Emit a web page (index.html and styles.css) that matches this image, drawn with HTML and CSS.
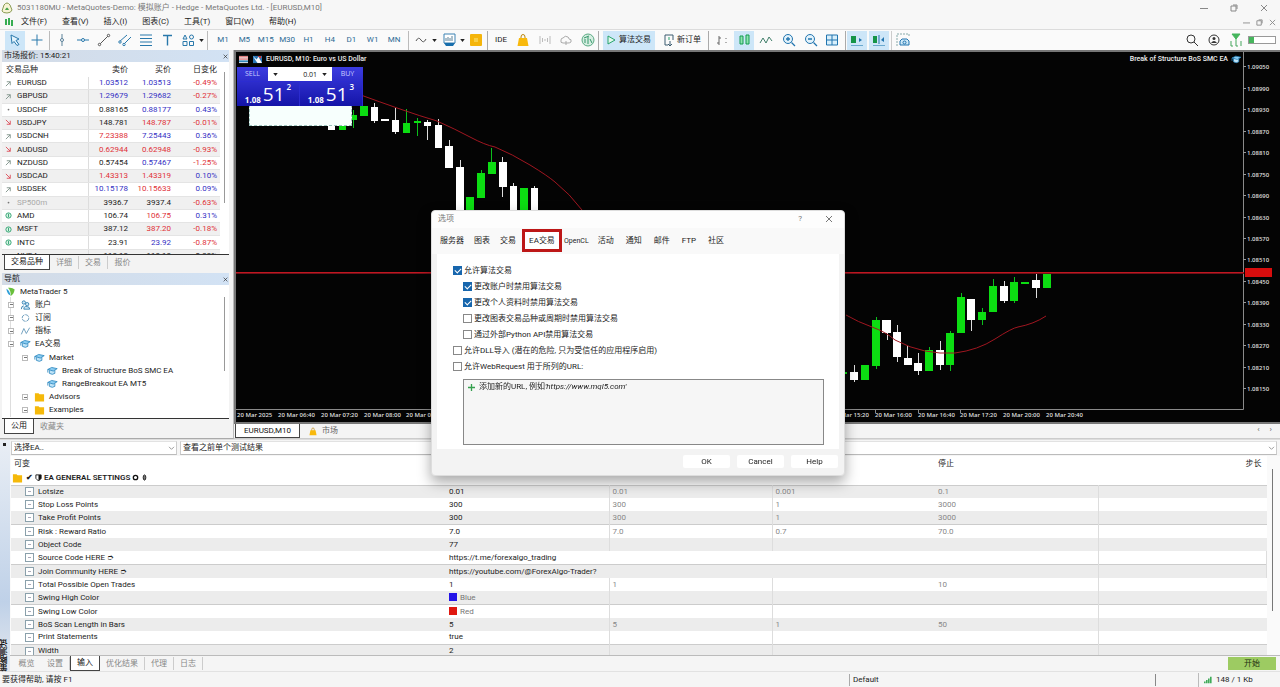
FILE: index.html
```html
<!DOCTYPE html>
<html lang="zh-CN">
<head>
<meta charset="utf-8">
<title>MetaTrader 5</title>
<link rel="stylesheet" href="styles.css">
</head>
<body>
<svg class="defs" aria-hidden="true">
  <symbol id="cap" viewBox="0 0 14 12"><path d="M3 5v4q4 2.500 7 0V5" fill="#bfe3f7" stroke="#2583bd"/><path d="M1 4l5-2.500 7 1.500-5 3z" fill="#8ccdf2" stroke="#2583bd"/><path d="M1 4v4" stroke="#2583bd"/></symbol>
  <symbol id="folder" viewBox="0 0 12 10"><path d="M1 1h4l1 1h5v8H1z" fill="#f5b90a"/></symbol>
  <symbol id="bag" viewBox="0 0 12 14"><path d="M4 6V4q0-2.500 2-2.500T8 4v2" fill="none" stroke="#b98409"/><path d="M2 5h8l1.500 8h-11z" fill="#f8b90d"/></symbol>
  <symbol id="up" viewBox="0 0 8 8"><path d="M1 7l5-5M2 2h4v4" fill="none" stroke="#7a8f86"/></symbol>
  <symbol id="down" viewBox="0 0 8 8"><path d="M1 1l5 5M2 6h4V2" fill="none" stroke="#dc4752"/></symbol>
  <symbol id="dot" viewBox="0 0 8 8"><circle cx="4" cy="4" r="1" fill="#777"/></symbol>
  <symbol id="coin" viewBox="0 0 8 8"><circle cx="4" cy="4" r="3" fill="#d9f2e6" stroke="#29a06c"/><path d="M4 2v4" stroke="#29a06c"/></symbol>
  <symbol id="caret" viewBox="0 0 6 4"><path d="M0 0h6L3 4z" fill="#222"/></symbol>
  <symbol id="chev" viewBox="0 0 8 6"><path d="M1 1l3 3 3-3" fill="none" stroke="#888"/></symbol>
  <symbol id="close" viewBox="0 0 8 8"><path d="M1 1l6 6M7 1L1 7" fill="none" stroke="currentColor"/></symbol>
  <symbol id="max" viewBox="0 0 8 8"><path d="M1 2h5v5H1zM3 1h4v4" fill="none" stroke="currentColor"/></symbol>
  <symbol id="min" viewBox="0 0 8 8"><path d="M0 4.500h8" stroke="currentColor"/></symbol>
</svg>

<header class="titlebar">
  <svg class="i12" viewBox="0 0 12 12"><path d="M3 3q3-4 6 0l2 5q-1 3-5 3T1 9z" fill="#f7f3d5" stroke="#8a9c54"/><path d="M4 8q2-5 4 0z" fill="#4ba64f"/></svg>
  <h1>5031180MU - MetaQuotes-Demo: 模拟账户 - Hedge - MetaQuotes Ltd. - [EURUSD,M10]</h1>
  <div class="winbtns"><button aria-label="最小化"><svg><use href="#min"/></svg></button><button aria-label="还原"><svg><use href="#max"/></svg></button><button aria-label="关闭"><svg><use href="#close"/></svg></button></div>
</header>
<nav class="menubar">
  <svg class="i10" viewBox="0 0 10 10"><path d="M2 2v6M5 1v7M8 3v6" stroke="#37ad52" stroke-width="2"/></svg>
  <button>文件(F)</button><button>查看(V)</button><button>插入(I)</button><button>图表(C)</button><button>工具(T)</button><button>窗口(W)</button><button>帮助(H)</button>
  <div class="winbtns small"><button aria-label="最小化"><svg><use href="#min"/></svg></button><button aria-label="还原"><svg><use href="#max"/></svg></button><button aria-label="关闭"><svg><use href="#close"/></svg></button></div>
</nav>

<div class="toolbar">
  <div class="tg tg-cursor">
    <button class="on" aria-label="光标"><svg viewBox="0 0 14 14"><path d="M3 2l8 4-3 1.500 3 4-2 1-3-4-2 2z" fill="#e4f4fd" stroke="#2878ab"/></svg></button>
    <button aria-label="十字"><svg viewBox="0 0 14 14"><path d="M7 1.500v11M1.500 7h11" stroke="#2878ab"/></svg></button>
  </div>
  <div class="tg tg-draw">
    <button aria-label="垂直线"><svg viewBox="0 0 14 14"><path d="M7 1v12" stroke="#5b8199"/><circle cx="7" cy="7" r="1.500" fill="#fff" stroke="#5b8199"/></svg></button>
    <button aria-label="水平线"><svg viewBox="0 0 14 14"><path d="M1 7h12" stroke="#2878ab"/><circle cx="7" cy="7" r="1.500" fill="#fff" stroke="#2878ab"/></svg></button>
    <button aria-label="趋势线"><svg viewBox="0 0 14 14"><path d="M2 12L12 2" stroke="#555"/><circle cx="2.500" cy="11.500" r="1.200" fill="#fff" stroke="#555"/><circle cx="11.500" cy="2.500" r="1.200" fill="#fff" stroke="#555"/></svg></button>
    <button aria-label="通道"><svg viewBox="0 0 14 14"><path d="M1 9l8-7M5 12l8-8" stroke="#2878ab"/><circle cx="2" cy="9" r="1.200" fill="#fff" stroke="#2878ab"/><circle cx="6" cy="11.500" r="1.200" fill="#fff" stroke="#2878ab"/></svg></button>
    <button aria-label="斐波纳契"><svg viewBox="0 0 14 14"><path d="M1 2h12M1 5.500h12M1 9h12M1 12.500h12" stroke="#2878ab"/></svg></button>
    <button aria-label="文字"><svg viewBox="0 0 14 14"><path d="M3 2.500h9M7.500 2.500v10" stroke="#2878ab" stroke-width="1.400"/></svg></button>
    <button aria-label="图形"><svg viewBox="0 0 14 14"><path d="M4 2l2 4H2z" fill="none" stroke="#2878ab"/><circle cx="10.500" cy="4" r="2" fill="none" stroke="#2878ab"/><path d="M2 8.500h4v4H2zM8.500 8.500h4v4h-4z" fill="none" stroke="#2878ab"/></svg></button>
  </div>
  <svg class="caret"><use href="#caret"/></svg>
  <div class="tg tg-time"><button>M1</button><button>M5</button><button>M15</button><button>M30</button><button>H1</button><button>H4</button><button>D1</button><button>W1</button><button>MN</button></div>
  <div class="tg tg-ind">
    <button aria-label="指标"><svg viewBox="0 0 14 14"><path d="M2 8q2.500-5 5-1t5-1" fill="none" stroke="#555"/></svg></button><svg class="caret"><use href="#caret"/></svg>
    <button aria-label="模板"><svg viewBox="0 0 14 14"><path d="M2 1h11v9H2z" fill="#fff" stroke="#3c83b4"/><path d="M4 8V5M6 8V4M8 8V5M10 8V3" stroke="#5b8199"/><path d="M2 10h11l-2 3H4z" fill="#176eac"/></svg></button><svg class="caret"><use href="#caret"/></svg>
    <button aria-label="工具箱"><svg viewBox="0 0 14 14"><rect x="1" y="1" width="12" height="12" rx="1" fill="#f5b50b"/><path d="M5 5h4v4H5z" fill="#f9cf45"/></svg></button>
  </div>
  <div class="tg tg-ide">
    <button>IDE</button>
    <button aria-label="市场"><svg><use href="#bag"/></svg></button>
    <button aria-label="信号"><svg viewBox="0 0 14 14"><path d="M2 3v8M12 3v8M4.500 5v4M9.500 5v4M7 6v2" stroke="#bbb"/></svg></button>
    <button aria-label="云"><svg viewBox="0 0 14 14"><path d="M4 10q-3 0-2-3 0-2 2-2 2-3 5-1 1 1 1 2 3 0 2 3-1 1-3 1zM7 8v4" fill="none" stroke="#aaa"/></svg></button>
    <button aria-label="网络"><svg viewBox="0 0 14 14"><circle cx="7" cy="7" r="6" fill="#d5eee1" stroke="#5aaa83"/><path d="M4 10V6M7 11V4M9 6l2 4M3 5l5-2" stroke="#34976a"/></svg></button>
  </div>
  <div class="tg tg-algo">
    <button class="on text"><svg viewBox="0 0 14 14"><path d="M4 3l7 4-7 4z" fill="#e2f8ed" stroke="#27a36c"/></svg>算法交易</button>
    <button class="text"><svg viewBox="0 0 14 14"><path d="M6 12H3V2h8v5M8 8v5M6 11l2 2 2-2" fill="none" stroke="#3c5c70"/><path d="M7 4v3" stroke="#27a36c"/></svg>新订单</button>
  </div>
  <div class="tg tg-type">
    <button aria-label="柱形图"><svg viewBox="0 0 14 14"><path d="M4 3v9M4 5h2M2 10h2M11 5v1M11 9v1" stroke="#666"/></svg></button>
    <button class="on" aria-label="蜡烛图"><svg viewBox="0 0 14 14"><path d="M3 3h3v8H3zM9 2h3v9H9z" fill="#8fe4b0" stroke="#139b50"/></svg></button>
    <button aria-label="线形图"><svg viewBox="0 0 14 14"><path d="M1 10l3-5 3 5 3-6 3 4" fill="none" stroke="#3e7d68"/></svg></button>
  </div>
  <div class="tg tg-zoom">
    <button aria-label="放大"><svg viewBox="0 0 14 14"><circle cx="6" cy="6" r="4.500" fill="#e2f2fb" stroke="#2275af"/><path d="M9.500 9.500L13 13M6 4v4M4 6h4" stroke="#2275af" stroke-width="1.300"/></svg></button>
    <button aria-label="缩小"><svg viewBox="0 0 14 14"><circle cx="6" cy="6" r="4.500" fill="#e2f2fb" stroke="#2275af"/><path d="M9.500 9.500L13 13M4 6h4" stroke="#2275af" stroke-width="1.300"/></svg></button>
    <button aria-label="平铺"><svg viewBox="0 0 14 14"><path d="M1.500 2h11v10h-11zM7 2v10M1.500 7h11" fill="#d8effb" stroke="#2275af"/></svg></button>
  </div>
  <div class="tg tg-scroll">
    <button class="on" aria-label="自动滚动"><svg viewBox="0 0 14 14"><path d="M1 3h5v7H1z" fill="#159447"/><path d="M9 5l3 2-3 2z" fill="#2275af"/><path d="M1 12.500h12" stroke="#6ba9cf"/></svg></button>
    <button class="on" aria-label="图表平移"><svg viewBox="0 0 14 14"><path d="M1 3h4v7H1z" fill="#159447"/><path d="M7 2v9" stroke="#2275af"/><path d="M12 4L9 7l3 2z" fill="#2275af"/><path d="M1 12.500h12" stroke="#6ba9cf"/></svg></button>
  </div>
  <div class="tg"><button aria-label="截图"><svg viewBox="0 0 14 14"><path d="M1 13V1h12v3" fill="none" stroke="#8aa" stroke-dasharray="2 1"/><path d="M4 12V8l2-2h5l2 2v4z" fill="#cfe9f8" stroke="#2275af"/><circle cx="8.500" cy="9.500" r="1.500" fill="none" stroke="#2275af"/></svg></button></div>
  <div class="tools-right">
    <button aria-label="搜索"><svg viewBox="0 0 14 14"><circle cx="6" cy="6" r="4" fill="none" stroke="#333"/><path d="M9 9l4 4" stroke="#333"/></svg></button>
    <button aria-label="账户"><svg viewBox="0 0 14 14"><circle cx="7" cy="7" r="5" fill="none" stroke="#333"/><circle cx="7" cy="5.500" r="1.500" fill="#333"/><path d="M4 10q3-4 6 0z" fill="#333"/></svg></button>
    <button aria-label="VPS"><svg viewBox="0 0 14 14"><path d="M3 1h8L7 6zM7 5v3" fill="#45b55c" stroke="#45b55c"/><path d="M2 8v5h2M7 8v5h2M12 8v5" fill="none" stroke="#45a55c"/></svg></button>
    <div class="battery"><i></i></div>
  </div>
</div>

<main class="work">
  <aside class="side">
    <section class="panel market">
      <h2 class="phead">市场报价: 15:40:21 <button aria-label="关闭"><svg><use href="#close"/></svg></button></h2>
      <div class="pbody">
        <table class="quotes">
          <colgroup><col class="q-icon"><col class="q-name"><col class="q-num"><col class="q-num"><col class="q-chg"></colgroup>
          <thead><tr><th colspan="2">交易品种</th><th>卖价</th><th>买价</th><th>日变化</th></tr></thead>
          <tbody>
          <tr><td><svg><use href="#up"/></svg></td><td>EURUSD</td><td class="b">1.03512</td><td class="b">1.03513</td><td class="r">-0.49%</td></tr>
          <tr><td><svg><use href="#up"/></svg></td><td>GBPUSD</td><td class="b">1.29679</td><td class="b">1.29682</td><td class="r">-0.27%</td></tr>
          <tr><td><svg><use href="#dot"/></svg></td><td>USDCHF</td><td>0.88165</td><td class="b">0.88177</td><td class="b">0.43%</td></tr>
          <tr><td><svg><use href="#down"/></svg></td><td>USDJPY</td><td>148.781</td><td class="r">148.787</td><td class="r">-0.01%</td></tr>
          <tr><td><svg><use href="#up"/></svg></td><td>USDCNH</td><td class="r">7.23388</td><td class="b">7.25443</td><td class="b">0.36%</td></tr>
          <tr><td><svg><use href="#down"/></svg></td><td>AUDUSD</td><td class="r">0.62944</td><td class="r">0.62948</td><td class="r">-0.93%</td></tr>
          <tr><td><svg><use href="#up"/></svg></td><td>NZDUSD</td><td>0.57454</td><td class="b">0.57467</td><td class="r">-1.25%</td></tr>
          <tr><td><svg><use href="#down"/></svg></td><td>USDCAD</td><td class="r">1.43313</td><td class="r">1.43319</td><td class="b">0.10%</td></tr>
          <tr><td><svg><use href="#up"/></svg></td><td>USDSEK</td><td class="b">10.15178</td><td class="r">10.15633</td><td class="b">0.09%</td></tr>
          <tr><td><svg><use href="#dot"/></svg></td><td class="g">SP500m</td><td>3936.7</td><td>3937.4</td><td class="r">-0.63%</td></tr>
          <tr><td><svg><use href="#coin"/></svg></td><td>AMD</td><td>106.74</td><td class="r">106.75</td><td class="b">0.31%</td></tr>
          <tr><td><svg><use href="#coin"/></svg></td><td>MSFT</td><td>387.12</td><td class="r">387.20</td><td class="r">-0.18%</td></tr>
          <tr><td><svg><use href="#coin"/></svg></td><td>INTC</td><td>23.91</td><td class="b">23.92</td><td class="r">-0.87%</td></tr>
          <tr><td></td><td>NVDA</td><td>118.13</td><td>118.18</td><td>0.33%</td></tr>
          </tbody>
        </table>
        <div class="scroll scroll-a"></div>
      </div>
      <div class="tabs"><button class="cur">交易品种</button><button>详细</button><button>交易</button><button>报价</button></div>
    </section>
    <section class="panel navi">
      <h2 class="phead">导航 <button aria-label="关闭"><svg><use href="#close"/></svg></button></h2>
      <div class="pbody">
        <ul class="tree">
          <li class="l0"><svg viewBox="0 0 12 12"><path d="M1 2q4 2 5 8-4-1-5-8z" fill="#2f9fd8"/><path d="M3 1q5-1 8 2-1 6-5 8 1-6-3-10z" fill="#69bf3c"/></svg>MetaTrader 5</li>
          <li class="l1"><i class="box"></i><svg viewBox="0 0 12 12"><circle cx="4" cy="3" r="2" fill="#cfe9f8" stroke="#2878ab"/><circle cx="8" cy="5" r="2" fill="#cfe9f8" stroke="#2878ab"/><path d="M1 11q0-4 3-4M4 11q0-4 4-3 3 0 3 3z" fill="#cfe9f8" stroke="#2878ab"/></svg>账户</li>
          <li class="l1"><i class="box"></i><svg viewBox="0 0 12 12"><circle cx="6" cy="6" r="4" fill="none" stroke="#5a90b4" stroke-dasharray="5 1"/></svg>订阅</li>
          <li class="l1"><i class="box"></i><svg viewBox="0 0 12 12"><path d="M1 10l3-7 3 6 4-7" fill="none" stroke="#5a90b4"/></svg>指标</li>
          <li class="l1"><i class="box open"></i><svg><use href="#cap"/></svg>EA交易</li>
          <li class="l2"><i class="box open"></i><svg><use href="#cap"/></svg>Market</li>
          <li class="l3"><svg><use href="#cap"/></svg>Break of Structure BoS SMC EA</li>
          <li class="l3"><svg><use href="#cap"/></svg>RangeBreakout EA MT5</li>
          <li class="l2"><i class="box"></i><svg><use href="#folder"/></svg>Advisors</li>
          <li class="l2"><i class="box"></i><svg><use href="#folder"/></svg>Examples</li>
        </ul>
        <div class="scroll scroll-b"></div>
      </div>
      <div class="tabs"><button class="cur narrow">公用</button><button>收藏夹</button></div>
    </section>
  </aside>

  <section class="chartarea">
    <div class="chart">
      <svg class="plot" viewBox="236 52 1044 370" preserveAspectRatio="xMinYMin slice" role="img" aria-label="EURUSD M10">
        <path d="M236 409.500H1243.500M1243.500 52V409.500M875.500 409v4M918.500 409v4M960.500 409v4" fill="none" stroke="#8a8a8a"/>
        <path d="M1243 66.500h3M1243 88.500h3M1243 109.500h3M1243 131.500h3M1243 152.500h3M1243 174.500h3M1243 195.500h3M1243 217.500h3M1243 238.500h3M1243 259.500h3M1243 281.500h3M1243 302.500h3M1243 324.500h3M1243 345.500h3M1243 367.500h3M1243 388.500h3" stroke="#999"/>
        <g fill="none" stroke="#ddd">
          <path d="M374.500 103V123M395.500 108V134M427.500 120V140M438.500 119V146M449.500 140V168M460.500 160V210M502.500 157V197M513.500 183V210M534.500 186V210M854.500 365V382M887.500 320V340M897.500 325V362M907.500 346V365M918.500 353V375M940.500 341V370M971.500 299V331M1004.500 281V303M1036.500 274V298"/>
        </g>
        <g fill="none" stroke="#0bbf1b">
          <path d="M353.500 110V128M417.500 118V136M406.500 109V124M481.500 170V198M491.500 148V174M876.500 317V369M929.500 347V371M950.500 331V371M961.500 293V333M982.500 308V325M993.500 279V312M1014.500 277V303"/>
        </g>
        <g fill="#fff">
          <path d="M328 124h7v6h-7zM371 107h7v14h-7zM381 119h8v2h-8zM392 120h7v12h-7zM424 122h7v4h-7zM435 125h7v23h-7zM445 146h8v22h-8zM456 167h8v43h-8zM499 162h8v25h-8zM510 186h7v24h-7zM531 188h7v22h-7z"/>
          <path d="M850 372h8v8h-8zM882 320h9v13h-9zM893 332h8v25h-8zM904 358h8v7h-8zM914 363h8v8h-8zM936 350h8v15h-8zM967 299h8v21h-8zM1000 286h8v15h-8zM1032 280h8v8h-8z"/>
        </g>
        <g fill="#0cdd12">
          <path d="M339 124h7v6h-7zM352 115h5v5h-5zM360 106h8v10h-8zM403 123h7v10h-7zM414 121h7v2h-7zM466 197h8v13h-8zM477 173h8v25h-8zM488 162h8v12h-8zM520 188h8v22h-8z"/>
          <path d="M843 372h4v2h-4zM861 365h8v15h-8zM872 320h8v46h-8zM925 350h8v21h-8zM946 333h8v32h-8zM957 297h8v36h-8zM978 312h8v8h-8zM989 286h8v26h-8zM1010 282h8v19h-8zM1021 282h8v2h-8zM1043 272h8v16h-8z"/>
        </g>
        <path d="M358 94Q380 102 400 109T437 121Q455 129 470 137T495 147Q512 154 530 165T555 182Q570 194 582 210M846 315Q858 322 872 327T895 340Q910 348 925 351T955 353Q978 350 995 339T1018 327Q1034 324 1046 316" fill="none" stroke="#a01620"/>
        <path d="M236 272.500H1244" stroke="#c01620"/>
        <path d="M236 273.500H1244" stroke="#701018"/>
        <rect x="1245" y="268" width="27" height="9" fill="#d80d0d"/>
        <g class="axis">
          <text x="1247" y="69">1.09050</text><text x="1247" y="91">1.08990</text><text x="1247" y="112">1.08930</text><text x="1247" y="134">1.08870</text><text x="1247" y="155">1.08810</text><text x="1247" y="177">1.08750</text><text x="1247" y="198">1.08690</text><text x="1247" y="220">1.08630</text><text x="1247" y="241">1.08570</text><text x="1247" y="262">1.08510</text><text x="1247" y="284">1.08450</text><text x="1247" y="305">1.08390</text><text x="1247" y="327">1.08330</text><text x="1247" y="348">1.08270</text><text x="1247" y="370">1.08210</text><text x="1247" y="391">1.08150</text>
          <text x="237" y="417">20 Mar 2025</text><text x="278" y="417">20 Mar 06:40</text><text x="321" y="417">20 Mar 07:20</text><text x="364" y="417">20 Mar 08:00</text><text x="406" y="417">20 Mar 08:40</text><text x="832" y="417">20 Mar 15:20</text><text x="875" y="417">20 Mar 16:00</text><text x="918" y="417">20 Mar 16:40</text><text x="960" y="417">20 Mar 17:20</text><text x="1003" y="417">20 Mar 20:00</text><text x="1046" y="417">20 Mar 20:40</text>
        </g>
      </svg>
      <div class="chart-title">
        <svg viewBox="0 0 12 10"><path d="M1 1h10v8H1z" fill="#eee"/><path d="M1 2h10M1 4.500h10" stroke="#d44" stroke-width="1"/><path d="M1 7h10" stroke="#38b" stroke-width="2"/></svg>
        <svg viewBox="0 0 12 10"><path d="M1 1h10v8H1z" fill="#2a78b8"/><path d="M1 1l4 4 2-3 4 7H6L4 6z" fill="#fff"/><path d="M6 1h4v3z" fill="#d33"/></svg>
        <span>EURUSD, M10: Euro vs US Dollar</span>
        <span class="ea">Break of Structure BoS SMC EA</span>
        <svg class="eaicon"><use href="#cap"/></svg>
      </div>
      <div class="hint"></div>
      <div class="oneclick">
        <div class="oc-top"><button>SELL</button><div class="vol"><svg class="caret"><use href="#caret"/></svg><input aria-label="交易量" value="0.01"><svg class="caret"><use href="#caret"/></svg></div><button>BUY</button></div>
        <div class="oc-price"><div><small>1.08</small><b>51</b><sup>2</sup></div><div><small>1.08</small><b>51</b><sup>3</sup></div></div>
      </div>
    </div>
    <div class="charttabs"><button class="cur">EURUSD,M10</button><button><svg><use href="#bag"/></svg>市场</button><span class="arrows"><i>‹</i><i>›</i></span></div>
  </section>
</main>

<section class="tester">
  <div class="strip"><i></i><span>策略测试</span></div>
  <div class="tbody">
    <div class="selects">
      <div class="sel s1"><select aria-label="选择EA"><option>选择EA..</option></select><svg><use href="#chev"/></svg></div>
      <div class="sel s2"><select aria-label="测试结果"><option>查看之前单个测试结果</option></select><svg><use href="#chev"/></svg></div>
    </div>
    <div class="paramwrap">
      <table class="params">
        <colgroup><col class="c1"><col class="c2"><col class="c2"><col class="c2"><col class="c2"><col></colgroup>
        <thead><tr><th>可变</th><th></th><th></th><th></th><th>停止</th><th class="right">步长</th></tr></thead>
        <tbody>
        <tr class="group"><td colspan="6"><svg class="fold"><use href="#folder"/></svg>✔ <svg class="mini" viewBox="0 0 8 8"><path d="M1 1h6v4L4 8 1 5z" fill="none" stroke="#111"/><path d="M4 1h3v4L4 8z" fill="#111"/></svg> EA GENERAL SETTINGS <svg class="mini" viewBox="0 0 8 8"><circle cx="4" cy="4" r="2.500" fill="none" stroke="#111" stroke-width="1.500"/></svg> <svg class="mini" viewBox="0 0 8 8"><ellipse cx="4" cy="4" rx="1.500" ry="3" fill="#777" stroke="#111"/></svg></td></tr>
        <tr><td><label><input type="checkbox">Lotsize</label></td><td>0.01</td><td>0.01</td><td>0.001</td><td>0.1</td><td></td></tr>
        <tr><td><label><input type="checkbox">Stop Loss Points</label></td><td>300</td><td>300</td><td>1</td><td>3000</td><td></td></tr>
        <tr><td><label><input type="checkbox">Take Profit Points</label></td><td>300</td><td>300</td><td>1</td><td>3000</td><td></td></tr>
        <tr><td><label><input type="checkbox">Risk : Reward Ratio</label></td><td>7.0</td><td>7.0</td><td>0.7</td><td>70.0</td><td></td></tr>
        <tr><td><label><input type="checkbox">Object Code</label></td><td>77</td><td></td><td></td><td></td><td></td></tr>
        <tr><td><label><input type="checkbox">Source Code HERE ➮</label></td><td colspan="4">https://t.me/forexalgo_trading</td><td></td></tr>
        <tr><td><label><input type="checkbox">Join Community HERE ➮</label></td><td colspan="4">https://youtube.com/@ForexAlgo-Trader?</td><td></td></tr>
        <tr><td><label><input type="checkbox">Total Possible Open Trades</label></td><td>1</td><td>1</td><td></td><td>10</td><td></td></tr>
        <tr><td><label><input type="checkbox">Swing High Color</label></td><td class="col"><i class="sw blue"></i>Blue</td><td></td><td></td><td></td><td></td></tr>
        <tr><td><label><input type="checkbox">Swing Low Color</label></td><td class="col"><i class="sw red"></i>Red</td><td></td><td></td><td></td><td></td></tr>
        <tr><td><label><input type="checkbox">BoS Scan Length in Bars</label></td><td>5</td><td>5</td><td>1</td><td>50</td><td></td></tr>
        <tr><td><label><input type="checkbox">Print Statements</label></td><td>true</td><td></td><td></td><td></td><td></td></tr>
        <tr><td><label><input type="checkbox">Width</label></td><td>2</td><td></td><td></td><td></td><td></td></tr>
        </tbody>
      </table>
      <div class="scroll scroll-c"></div>
    </div>
    <div class="tabs ttabs"><button>概览</button><button>设置</button><button class="cur narrow">输入</button><button>优化结果</button><button>代理</button><button>日志</button><button class="start">开始</button></div>
  </div>
</section>
<footer class="status"><span class="help">要获得帮助, 请按 F1</span><span class="prof">Default</span><span class="cell"></span><span class="cell2"></span><span class="net"><svg viewBox="0 0 10 10"><path d="M1 7v2M3.500 5v4M6 3v6M8.500 1v8" stroke="#3faa58" stroke-width="2"/></svg>148 / 1 Kb</span></footer>

<div class="dialog" role="dialog" aria-label="选项">
  <div class="dhead"><span>选项</span><button aria-label="帮助">?</button><button aria-label="关闭"><svg><use href="#close"/></svg></button></div>
  <div class="dtabs"><button>服务器</button><button>图表</button><button>交易</button><button class="mark">EA交易</button><button>OpenCL</button><button>活动</button><button>通知</button><button>邮件</button><button>FTP</button><button>社区</button></div>
  <form class="dform">
    <label><input type="checkbox" checked>允许算法交易</label>
    <label class="in"><input type="checkbox" checked>更改账户时禁用算法交易</label>
    <label class="in"><input type="checkbox" checked>更改个人资料时禁用算法交易</label>
    <label class="in"><input type="checkbox">更改图表交易品种或周期时禁用算法交易</label>
    <label class="in"><input type="checkbox">通过外部Python API禁用算法交易</label>
    <label><input type="checkbox">允许DLL导入 (潜在的危险, 只为受信任的应用程序启用)</label>
    <label><input type="checkbox">允许WebRequest 用于所列的URL:</label>
    <div class="urls"><svg viewBox="0 0 8 8"><path d="M4 0v8M0 4h8" stroke="#35a04e" stroke-width="1.500"/></svg><span>添加新的URL, 例如<em>'https://www.mql5.com'</em></span></div>
  </form>
  <div class="dfoot"><button>OK</button><button>Cancel</button><button>Help</button></div>
</div>
</body>
</html>
```
FILE: styles.css
```css
* { box-sizing: border-box; }
body {
  margin: 0;
  min-height: 100vh;
  display: flex;
  flex-direction: column;
  overflow: hidden;
  background: #f5f5f5;
  color: #1c1c1c;
  font: 8px/12px Roboto, "Noto Sans CJK SC", sans-serif;
}
button, input, select { font: inherit; color: inherit; margin: 0; padding: 0; border: 0; background: none; }
h1, h2, ul { margin: 0; padding: 0; font-weight: 400; }
svg { flex: none; display: block; }
.defs { position: absolute; width: 0; height: 0; }
i { font-style: normal; }

.titlebar, .menubar { display: flex; align-items: center; background: #f7f7f7; }
.titlebar { height: 15px; padding-left: 1px; gap: 4px; }
.titlebar h1 { font-size: 8px; color: #777; }
.i12 { width: 12px; height: 12px; }
.i10 { width: 10px; height: 10px; }
.menubar { height: 14px; padding-left: 4px; gap: 15px; }
.menubar .i10 { margin-right: -8px; }
.winbtns { margin-left: auto; display: flex; gap: 22px; padding-right: 12px; color: #888; }
.winbtns svg { width: 8px; height: 8px; }
.winbtns.small { gap: 6px; padding-right: 4px; }
.winbtns.small svg { width: 7px; height: 7px; }

.toolbar { height: 21px; display: flex; align-items: center; background: #fafafa; border-top: 1px solid #dcdcdc; padding-left: 5px; }
.toolbar button { min-width: 20px; height: 19px; display: flex; align-items: center; justify-content: center; }
.toolbar button svg { width: 14px; height: 14px; }
.toolbar .on { background: #cde6f8; }
.caret { width: 5px; height: 3px; }
.tg { flex: none; display: flex; align-items: center; justify-content: space-between; }
.tg-cursor { width: 45px; border-right: 1px solid #bbb; padding-right: 2px; }
.tg-draw { width: 146px; margin: 0 1px 0 2px; }
.tg-time { width: 202px; margin-left: 3px; padding: 0 4px 0 5px; border: solid #bbb; border-width: 0 1px; color: #2d6b95; }
.tg-ind { width: 77px; padding-right: 1px; margin-left: 2px; border-right: 1px solid #aaa; }
.tg-ide { width: 108px; margin-left: 3px; border-right: 1px solid #aaa; }
.tg-algo { width: 106px; margin-left: 4px; border-right: 1px solid #aaa; padding-right: 3px; }
.toolbar .text { padding: 0 4px 0 1px; gap: 1px; }
.tg-type { width: 64px; margin-left: 3px; }
.tg-zoom { width: 67px; margin-left: 3px; padding-right: 3px; border-right: 1px solid #aaa; }
.tg-scroll { width: 45px; margin: 0 1px 0 1px; padding-right: 2px; border-right: 1px solid #ccc; }
.tools-right { margin-left: auto; display: flex; align-items: center; gap: 2px; padding-right: 4px; }
.battery { width: 28px; height: 8px; border: 1px solid #999; background: #fff; }
.battery i { display: block; width: 5px; height: 6px; background: #45b55c; }

.work { flex: 1; min-height: 0; display: grid; grid-template-columns: 234px 1fr; }
.side { display: flex; flex-direction: column; background: #f3f3f3; border-right: 1px solid #bbb; border-bottom: 1px solid #aaa; padding: 0 4px 3px 2px; gap: 3px; }
.panel { display: flex; flex-direction: column; }
.phead { height: 12px; display: flex; justify-content: space-between; padding: 0 1px 0 2px; font-size: 8px; line-height: 12px; background: linear-gradient(90deg, #d3dbe6, #d2e2f4); color: #222; }
.phead button { display: flex; align-items: center; }
.phead svg { width: 5px; height: 5px; }
.pbody { background: #fff; border-bottom: 1px solid #333; overflow: hidden; display: flex; }
.market .pbody { height: 193px; }
.navi .pbody { height: 134px; }
.quotes { width: 218px; height: 201px; border-collapse: collapse; table-layout: fixed; }
.q-icon { width: 14px; }
.q-name { width: 72px; }
.q-num { width: 43px; }
.q-chg { width: 46px; }
.quotes th, .quotes td { padding: 0 3px 0 0; text-align: right; line-height: 12px; font-weight: 400; }
.quotes tbody td { border-bottom: 1px solid #e4e4e4; }
.quotes th { height: 15px; }
.quotes th:first-child { text-align: left; padding-left: 4px; }
.quotes td:first-child { padding-left: 3px; }
.quotes td:nth-child(2) { text-align: left; padding-left: 1px; border-right: 1px solid #ddd; }
.quotes tbody tr:nth-child(even) { background: #f0f0f0; }
.quotes svg { width: 7px; height: 7px; }
.quotes .b { color: #3530c4; }
.quotes .r { color: #e03038; }
.quotes .g { color: #aaa; }
.scroll { width: 1px; background: #999; margin-left: 4px; }
.scroll-a { margin-top: 10px; height: 131px; }
.scroll-b { margin-top: 12px; height: 74px; }
.scroll-c { margin: 13px 0 0 5px; height: 142px; background: #777; }

.tabs { display: flex; height: 15px; padding-left: 2px; color: #888; }
.tabs button { padding: 0 6px; margin: 1px 0; min-width: 29px; }
.tabs button + button:not(.cur):not(.start) { border-right: 1px solid #ccc; }
.tabs button:nth-last-child(1) { border-right: 0 !important; }
.tabs .cur, .charttabs .cur { background: #fff; border: 1px solid #444; border-top: 0; color: #111; margin: 0; }
.tabs .cur { min-width: 46px; }
.tabs .cur.narrow { min-width: 30px; }

.tree { width: 218px; height: 132px; display: grid; grid-template-rows: repeat(10, 1fr); list-style: none; background: linear-gradient(#ddd, #ddd) 8px 12px / 1px 100% no-repeat; }
.tree li { display: flex; align-items: center; gap: 4px; line-height: 12px; white-space: nowrap; }
.tree svg { width: 11px; height: 10px; }
.tree .l0 { padding-left: 3px; }
.tree .l1 { padding-left: 6px; }
.tree .l1 .box { margin-right: 2px; }
.tree .l2 { padding-left: 20px; }
.tree .l2 .box { margin-right: 2px; }
.tree .l3 { padding-left: 45px; }
.box { width: 6px; height: 6px; border: 1px solid #bbb; background: linear-gradient(#777, #777) center / 3px 1px no-repeat #fff; }

.chartarea { min-width: 0; display: flex; flex-direction: column; background: #f3f3f3; }
.chart { position: relative; flex: 1; min-height: 0; background: #040404; border: solid #777; border-width: 2px 0 2px 2px; overflow: hidden; }
.plot { width: 100%; height: 100%; }
.axis { font: 6px "Open Sans", sans-serif; font-weight: 600; fill: #ddd; }
.chart-title { position: absolute; top: 2px; left: 2px; right: 38px; display: flex; align-items: center; gap: 3px; color: #eee; font-size: 7px; line-height: 10px; font-weight: 500; }
.chart-title svg { width: 11px; height: 9px; }
.ea { margin-left: auto; }
.oneclick { position: absolute; left: 1px; top: 15px; width: 126px; background: linear-gradient(#3c3ce0, #1414a8); color: #fff; font-family: "Open Sans", sans-serif; }
.oc-top { display: flex; height: 14px; }
.oc-top > button { flex: 1; color: #c9ccff; font-size: 7px; }
.vol { width: 64px; display: flex; align-items: center; gap: 5px; padding: 0 5px; background: #fff; color: #111; }
.vol input { flex: 1; min-width: 0; height: 14px; text-align: right; font-size: 7px; }
.oc-price { display: grid; grid-template-columns: 1fr 1fr; height: 25px; }
.oc-price > div { display: flex; align-items: flex-end; justify-content: center; gap: 2px; border: solid #2b2bd0; border-width: 1px 1px 0 0; }
.oc-price small { font-size: 8px; font-weight: 700; line-height: 12px; }
.oc-price b { font-size: 19px; line-height: 24px; font-weight: 400; }
.oc-price sup { font-size: 8px; line-height: 10px; align-self: flex-start; font-weight: 600; }
.hint { position: absolute; left: 13px; top: 48px; width: 103px; height: 26px; background: #f7fffd; border: 1px dashed #9cc4bd; }
.charttabs { height: 15px; display: flex; background: #f4f4f4; border-bottom: 1px solid #ccc; padding-left: 1px; color: #666; }
.charttabs button { display: flex; align-items: center; gap: 4px; padding: 0 8px; }
.charttabs button svg { width: 10px; height: 9px; }
.arrows { margin-left: auto; display: flex; gap: 10px; padding-right: 8px; }

.tester { display: flex; height: 232px; border-top: 1px solid #ddd; }
.strip { width: 10px; display: flex; flex-direction: column; justify-content: space-between; background: linear-gradient(#e9eef5, #bfd1e8 70%, #e5e8ee); }
.strip i { width: 3px; height: 3px; margin: 3px; background: #222; }
.strip span { writing-mode: vertical-rl; transform: rotate(180deg); line-height: 10px; font-weight: 700; }
.tbody { flex: 1; min-width: 0; display: flex; flex-direction: column; }
.selects { display: flex; gap: 3px; padding: 1px 3px 0 1px; height: 16px; }
.sel { position: relative; }
.s1 { width: 166px; }
.s2 { flex: 1; }
.sel select { appearance: none; width: 100%; height: 14px; padding-left: 2px; background: #fff; border: 1px solid #ccc; border-color: #e2e2e2 #ccc #bbb; }
.sel svg { position: absolute; right: 2px; top: 5px; width: 7px; height: 5px; }
.paramwrap { flex: 1; min-height: 0; overflow: hidden; display: flex; background: #fafafa; border-bottom: 1px solid #bbb; padding-left: 1px; }
.params { flex: 1; height: 202px; border-collapse: collapse; table-layout: fixed; background: #fff; }
.paramwrap .scroll { margin-right: 7px; }
.params .c1 { width: 435px; }
.params .c2 { width: 163px; }
.params th, .params td { padding: 0 3px; text-align: left; font-weight: 400; line-height: 12px; white-space: nowrap; overflow: hidden; }
.params th { height: 15px; }
.params th.right { text-align: right; padding-right: 5px; }
.params tbody tr:nth-child(even) { background: #ececec; }
.params tbody tr:nth-child(3n+1) { border-bottom: 1px solid #ccc; }
.params td:nth-child(n+3) { color: #888; }
.params td:nth-child(2), .params td:nth-child(3), .params td:nth-child(5) { border-right: 1px solid #ddd; }
.params .group td { font-weight: 600; height: 14px; padding-left: 1px; border-right: 0; }
.group svg { display: inline-block; vertical-align: middle; }
.fold { width: 11px; height: 10px; margin-right: 3px; }
.mini { width: 7px; height: 7px; }
.params label { display: flex; align-items: center; gap: 4px; padding-left: 11px; }
.params input { appearance: none; width: 9px; height: 9px; border: 1px solid #8aa0ab; background: linear-gradient(#aab, #aab) center / 3px 1px no-repeat #fff; }
.params .col { color: #777; }
.sw { display: inline-block; width: 8px; height: 8px; margin-right: 3px; vertical-align: middle; }
.blue { background: #2414e8; }
.red { background: #e01810; }
.ttabs .start { margin: 1px 4px 1px auto; width: 48px; background: #9dcb62; color: #223010; }

.status { height: 17px; display: flex; align-items: center; background: #f5f5f5; border-top: 1px solid #e2e2e2; padding-left: 2px; }
.status .help { flex: 1; }
.status .prof { width: 306px; border-left: 1px solid #aaa; padding-left: 3px; }
.status .cell { width: 43px; height: 12px; border-left: 1px solid #888; }
.status .cell2 { height: 14px; border-left: 1px solid #bbb; }
.net { width: 81px; display: flex; align-items: center; gap: 4px; padding-left: 5px; }
.net svg { width: 8px; height: 8px; }

.dialog { position: fixed; left: calc(50% - 209px); top: calc(50% - 134px); width: 414px; background: #f3f3f3; border: 1px solid #ddd; border-radius: 4px; box-shadow: 0 6px 14px rgba(0, 0, 0, .35); display: flex; flex-direction: column; }
.dhead { height: 17px; display: flex; align-items: center; padding: 0 11px 0 6px; gap: 23px; color: #777; background: #fdfdfd; border-radius: 4px 4px 0 0; }
.dhead span { flex: 1; }
.dhead svg { width: 8px; height: 8px; }
.dtabs { display: flex; align-items: center; padding: 2px 4px; height: 26px; background: #f9f9f9; }
.dtabs button { padding: 0 4px; height: 20px; margin-right: 2px; }
.dtabs .mark { height: 23px; width: 40px; margin: 0; padding: 0; border: 3px solid #bd1717; background: #fff; }
.dtabs .mark ~ button { margin-right: 4px; }
.dtabs .mark + button { margin-right: 3px; padding: 0 2px; font-size: 7px; }
.dform { margin: 0 5px; padding: 9px 15px 10px 16px; background: #fff; display: grid; grid-auto-rows: 16px; align-items: center; }
.dform label { display: flex; align-items: center; gap: 2px; white-space: nowrap; }
.dform .in { padding-left: 10px; }
.dform input { appearance: none; width: 9px; height: 9px; border: 1px solid #888; background: #fff; position: relative; }
.dform input:checked { background: #1766ad; border-color: #1766ad; }
.dform input:checked::after { content: ""; position: absolute; left: 1px; top: 1px; width: 5px; height: 3px; border: solid #fff; border-width: 0 0 1px 1px; transform: rotate(-45deg); }
.urls { grid-row-end: span 4; align-self: start; height: 66px; margin: 4px 0 0 10px; padding: 1px 4px; display: flex; align-items: flex-start; gap: 4px; background: #f6f6f6; border: 1px solid #888; }
.urls svg { width: 7px; height: 7px; margin-top: 3px; }
.dfoot { height: 26px; display: flex; justify-content: flex-end; align-items: center; gap: 7px; padding: 0 6px; }
.dfoot button { width: 47px; height: 13px; background: #fff; border-radius: 2px; }
```
